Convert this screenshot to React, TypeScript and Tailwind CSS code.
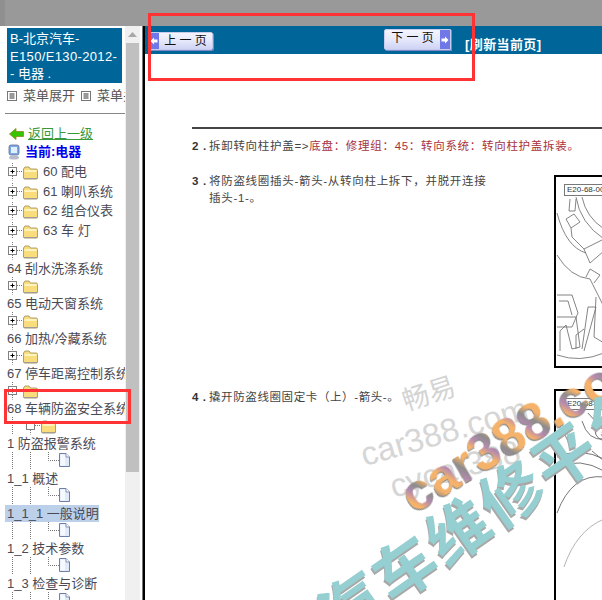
import React from 'react';

const cjk = { fontFamily: '"Liberation Sans", "Noto Sans CJK SC", sans-serif' };

// tree glyphs, all drawn on the same 17.5px row
const Folder = ({ x }: { x: number }) => (
  <g transform={`translate(${x} 2)`}>
    <path d="M0.5 4 L2 2 H6 L7.5 4 H13 Q14.5 4 14.5 5.5 V13 Q14.5 14 13 14 H2 Q0.5 14 0.5 13 Z" fill="#f9dc7c" stroke="#a08a50" strokeWidth="0.8" />
    <path d="M1.5 5 H13.5 V7 H1.5 Z" fill="#fff3c0" />
    <path d="M1 13.6 H14.5" stroke="#9a9a9a" strokeWidth="1" />
  </g>
);

const Box = ({ cx, plus }: { cx: number; plus: boolean }) => (
  <g>
    <rect x={cx - 4} y={4.5} width="8" height="8" fill="#fff" stroke="#808080" strokeWidth="1" />
    {plus && <path d={`M${cx - 2} 8.5 H${cx + 2} M${cx} 6.5 V10.5`} stroke="#000" strokeWidth="1" />}
  </g>
);

const Doc = ({ x }: { x: number }) => (
  <g transform={`translate(${x} 1)`}>
    <path d="M0.5 0.5 H7 L10.5 4 V13.5 H0.5 Z" fill="#dfeafa" stroke="#6f7fa8" strokeWidth="1" />
    <path d="M7 0.5 V4 H10.5" fill="#fff" stroke="#6f7fa8" strokeWidth="0.8" />
    <path d="M1.5 1.5 H6 V12.5 H1.5 Z" fill="#fff" opacity="0.7" />
  </g>
);

const dots = { stroke: '#777', strokeWidth: 1, strokeDasharray: '1 1', fill: 'none' };

const FolderRow = () => (
  <svg width="60" height="17.5" className="block">
    <path d="M12.5 0 V4" {...dots} />
    <path d="M12.5 13 V17.5" {...dots} />
    <path d="M17 8.5 H23" {...dots} />
    <Box cx={12.5} plus />
    <Folder x={23} />
  </svg>
);

const OpenRow = () => (
  <svg width="60" height="17.5" className="block">
    <path d="M12.5 0 V17.5" {...dots} />
    <path d="M30.5 13 V17.5" {...dots} />
    <path d="M35 8.5 H41" {...dots} />
    <Box cx={30.5} plus={false} />
    <Folder x={41} />
  </svg>
);

const DocRow = () => (
  <svg width="72" height="17.5" className="block">
    <path d="M12.5 0 V17.5" {...dots} />
    <path d="M30.5 0 V17.5" {...dots} />
    <path d="M48.5 0 V8.5 H59" {...dots} />
    <Doc x={59} />
  </svg>
);

const TreeLabel = ({ children, active }: { children: React.ReactNode; active?: boolean }) => (
  <div className={`h-[17.5px] whitespace-nowrap text-[13px] leading-[17.5px] text-[#4a4a55] ${active ? 'ml-[5px] pl-[2px] bg-[#bdd0ea] w-[94px]' : 'pl-[7px]'}`}>
    {children}
  </div>
);

const TopNode = ({ label }: { label: string }) => (
  <div className="flex items-center h-[19.5px]">
    <FolderRow />
    <span className="-ml-[17px] text-[13px] text-[#4a4a55] whitespace-nowrap">{label}</span>
  </div>
);

const topNodes = ['60 配电', '61 喇叭系统', '62 组合仪表', '63 车 灯'];
const groups = ['64 刮水洗涤系统', '65 电动天窗系统', '66 加热/冷藏系统', '67 停车距离控制系统'];
const leaves = ['1 防盗报警系统', '1_1 概述', '1_1_1 一般说明', '1_2 技术参数', '1_3 检查与诊断'];

const MiniBox = () => (
  <svg width="10" height="10" className="shrink-0">
    <rect x="0.5" y="0.5" width="9" height="9" fill="#fff" stroke="#777" />
    <path d="M2.5 3 H7.5 M2.5 5 H7.5 M2.5 7 H7.5" stroke="#333" />
  </svg>
);

const Sidebar = () => (
  <div className="w-[125px] shrink-0 overflow-hidden pt-[2px] bg-white">
    <div className="ml-[7px] w-[115px] h-[55px] bg-[#006699] pl-[3px] pt-[2px] text-[13px] leading-[17.5px] text-white">
      B-北京汽车-<br /><span className="tracking-[0.35px]">E150/E130-2012-</span><br />- 电器 .
    </div>
    <div className="flex items-center h-[17px] mt-[4px] pl-[7px] text-[13px] text-[#555] whitespace-nowrap">
      <MiniBox />
      <span className="ml-[6px]">菜单展开</span>
      <span className="ml-[6px]"><MiniBox /></span>
      <span className="ml-[6px]">菜单关闭</span>
    </div>
    <div className="mt-[9px] ml-[5px] h-px bg-[#888]" />
    <div className="flex items-center h-[18px] mt-[11px] pl-[9px]">
      <svg width="15" height="12" className="shrink-0">
        <path d="M0.5 6 L7 0.5 V3.5 H14.5 V8.5 H7 V11.5 Z" fill="#39c400" stroke="#8a8a20" strokeWidth="0.8" />
      </svg>
      <span className="ml-[4px] text-[13px] text-[#3a9a3a] underline whitespace-nowrap">返回上一级</span>
    </div>
    <div className="flex items-center h-[18px] pl-[8px]">
      <svg width="13" height="16" className="shrink-0">
        <rect x="1" y="1" width="10" height="10" rx="2" fill="#7fa8e8" stroke="#5f6f90" strokeWidth="0.8" />
        <rect x="3" y="3" width="6" height="6" fill="#dff0ff" />
        <ellipse cx="6" cy="13.5" rx="5" ry="2" fill="#b8bcc8" />
      </svg>
      <span className="ml-[4px] text-[13px] font-bold text-[#0000ee] whitespace-nowrap">当前:电器</span>
    </div>
    <div className="mt-[1px]">
      {topNodes.map((n) => <TopNode key={n} label={n} />)}
    </div>
    <div className="mt-[2px]">
      <FolderRow />
    </div>
    {groups.map((g) => (
      <React.Fragment key={g}>
        <TreeLabel>{g}</TreeLabel>
        <FolderRow />
      </React.Fragment>
    ))}
    <TreeLabel>68 车辆防盗安全系统</TreeLabel>
    <OpenRow />
    {leaves.map((l, i) => (
      <React.Fragment key={l}>
        <TreeLabel active={i === 2}>{l}</TreeLabel>
        <DocRow />
      </React.Fragment>
    ))}
  </div>
);

const Scrollbar = () => (
  <div className="w-[15px] shrink-0 bg-[#f0f0f0] flex flex-col">
    <div className="h-[17px] flex items-center justify-center">
      <svg width="9" height="5"><path d="M0 5 L4.5 0 L9 5 Z" fill="#a8a8a8" /></svg>
    </div>
    <div className="ml-px w-[13px] h-[429px] bg-[#c0c0c0]" />
  </div>
);

const PageButton = ({ label, dir }: { label: string; dir: 'prev' | 'next' }) => (
  <div className={`flex items-stretch border border-[#c8ccec] bg-gradient-to-b from-[#f4f5ff] via-[#e6e8fb] to-[#cfd3f4] shadow-[1px_1px_0_#8088c8] ${dir === 'prev' ? 'w-[65px] h-[18px] rounded-r-[2px]' : 'w-[67px] h-[21px] rounded-l-[2px] flex-row-reverse'}`}>
    <div className="w-[10px] bg-[#6f78e6] flex items-center justify-center">
      <svg width="8" height="8">
        <path d={dir === 'prev' ? 'M0.5 4 L4 0.5 V2.5 H7.5 V5.5 H4 V7.5 Z' : 'M7.5 4 L4 0.5 V2.5 H0.5 V5.5 H4 V7.5 Z'} fill="#fff" />
      </svg>
    </div>
    <span className="flex-1 text-center text-[12px] leading-[17px] text-[#111] whitespace-nowrap">{label}</span>
  </div>
);

// line work of the two service figures
const FigureOne = () => (
  <svg width="48" height="188" className="block" fill="none" stroke="#777" strokeWidth="0.9">
    <path d="M14 22 L13 34 H19 L20 22 M26 20 Q30 40 48 52 M20 20 Q24 46 48 62" />
    <path d="M10 42 L18 37 L24 45 L15 51 Z M15 51 L16 60 L28 72 L48 62 M28 72 L34 86 L48 74" />
    <path d="M1 36 Q10 70 30 76 M1 78 Q14 100 34 102 L48 130 M30 100 L34 92 L44 98 L38 106" />
    <path d="M1 118 H16 L22 136 L16 150 H1 M3 124 H12 L16 138 M1 140 H20 L24 170 L16 172 L10 148" />
    <path d="M26 172 L32 130 H40 L28 174 M40 120 L38 160 L48 166 M10 148 L4 154 V174 M1 178 Q24 186 48 176" />
    <path d="M20 158 V172 M28 152 L20 158" />
  </svg>
);

const FigureTwo = () => (
  <svg width="48" height="210" className="block" fill="none" stroke="#666" strokeWidth="0.9">
    <path d="M1 66 Q24 56 48 68 M1 76 Q24 66 48 80 M1 122 Q16 82 48 86" />
    <path d="M26 30 Q32 50 48 48 M32 22 L48 40 M36 60 L48 70" />
    <path d="M8 176 Q20 140 48 128" stroke="#aaa" />
    <path d="M40 34 Q36 46 48 50 M1 32 Q10 44 16 58" />
  </svg>
);

const Figure = ({ label, h, children }: { label: string; h: string; children: React.ReactNode }) => (
  <div className={`relative w-[48px] shrink-0 border-2 border-r-0 border-black bg-white overflow-hidden ${h}`}>
    {children}
    <div className="absolute left-[8px] top-[7px] w-[60px] h-[12px] border border-[#777] bg-white pl-[2px] text-[8px] leading-[10px] text-[#333] whitespace-nowrap">{label}</div>
  </div>
);

const Watermark = () => (
  <div className="absolute inset-0 overflow-hidden pointer-events-none whitespace-nowrap" style={cjk}>
    <span className="absolute left-[402px] top-[381px] -rotate-[18deg] text-[27px] leading-none text-[#d4d4d4]">畅易</span>
    <span className="absolute left-[358px] top-[415px] -rotate-[16deg] text-[33px] leading-none text-[#d6d6d6]">car388.com</span>
    <span className="absolute left-[388px] top-[452px] -rotate-[16deg] text-[33px] leading-none text-[#d6d6d6]">cycar388</span>
    <span className="absolute left-[384px] top-[399px] -rotate-[31deg] text-[52px] font-bold leading-none text-transparent bg-clip-text drop-shadow-[-1px_1px_0_#8a8a8a] bg-[repeating-linear-gradient(60deg,#f5b26a_0px,#f5b26a_14px,#b58ab0_22px,#8c8c8c_30px,#f5b26a_38px)]">car388.com</span>
    <span className="absolute left-[292px] top-[482px] -rotate-[35deg] text-[62px] font-bold leading-none tracking-[3px] text-[#96cfd1] [text-shadow:-2px_2px_0_#a8a8a8]">汽车维修平台</span>
  </div>
);

export default function App() {
  return (
    <div className="relative w-[602px] h-[600px] overflow-hidden bg-white flex flex-col" style={cjk}>
      <div className="h-[26px] shrink-0 bg-[#999999] flex">
        <div className="w-[5px] bg-[#8f8f8f]" />
      </div>
      <div className="flex flex-1 min-h-0">
        <Sidebar />
        <Scrollbar />
        <div className="w-[5px] shrink-0 flex">
          <div className="w-[2px] bg-white" />
          <div className="w-[1px] bg-[#777]" />
          <div className="w-[2px] bg-black" />
        </div>
        <div className="flex-1 min-w-0 overflow-hidden">
          <div className="h-[28px] bg-[#006699] relative flex items-start">
            <div className="ml-[3px] mt-[6px]"><PageButton label="上 一 页" dir="prev" /></div>
            <div className="ml-[171px] mt-[3px]"><PageButton label="下 一 页" dir="next" /></div>
            <span className="ml-[14px] mt-[10px] text-[13px] leading-[18px] tracking-[0.4px] font-bold text-white whitespace-nowrap">[刷新当前页]</span>
          </div>
          <div className="ml-[47px] mt-[73px] h-[2px] bg-[#444]" />
          <div className="ml-[47px] mt-[10px] flex text-[11.5px] leading-[15px] tracking-[0.7px] text-[#444] whitespace-nowrap">
            <span className="w-[17px] font-bold text-[#333]">2 .</span>
            <span>拆卸转向柱护盖=&gt;<span className="text-[#a8323c]">底盘：修理组：45：转向系统：转向柱护盖拆装。</span></span>
          </div>
          <div className="mt-[21px] flex">
            <div className="ml-[47px] w-[362px] shrink-0 -mt-[2px] flex text-[11.5px] leading-[17px] tracking-[0.7px] text-[#444]">
              <span className="w-[17px] shrink-0 font-bold text-[#333]">3 .</span>
              <span className="w-[282px]">将防盗线圈插头-箭头-从转向柱上拆下，并脱开连接插头-1-。</span>
            </div>
            <Figure label="E20-68-00" h="h-[193px]"><FigureOne /></Figure>
          </div>
          <div className="mt-[21px] flex">
            <div className="ml-[47px] w-[362px] shrink-0 pt-[1px] flex text-[11.5px] leading-[15px] tracking-[0.6px] text-[#444]">
              <span className="w-[17px] shrink-0 font-bold text-[#333]">4 .</span>
              <span className="whitespace-nowrap">撬开防盗线圈固定卡（上）-箭头-。</span>
            </div>
            <Figure label="E20-68-00" h="h-[215px]"><FigureTwo /></Figure>
          </div>
        </div>
      </div>
      <Watermark />
      <div className="absolute left-[148px] top-[13px] w-[327px] h-[68px] border-[3px] border-[#ff3333]" />
      <div className="absolute left-[4px] top-[389px] w-[127px] h-[35px] border-[3px] border-[#ff3333]" />
    </div>
  );
}
